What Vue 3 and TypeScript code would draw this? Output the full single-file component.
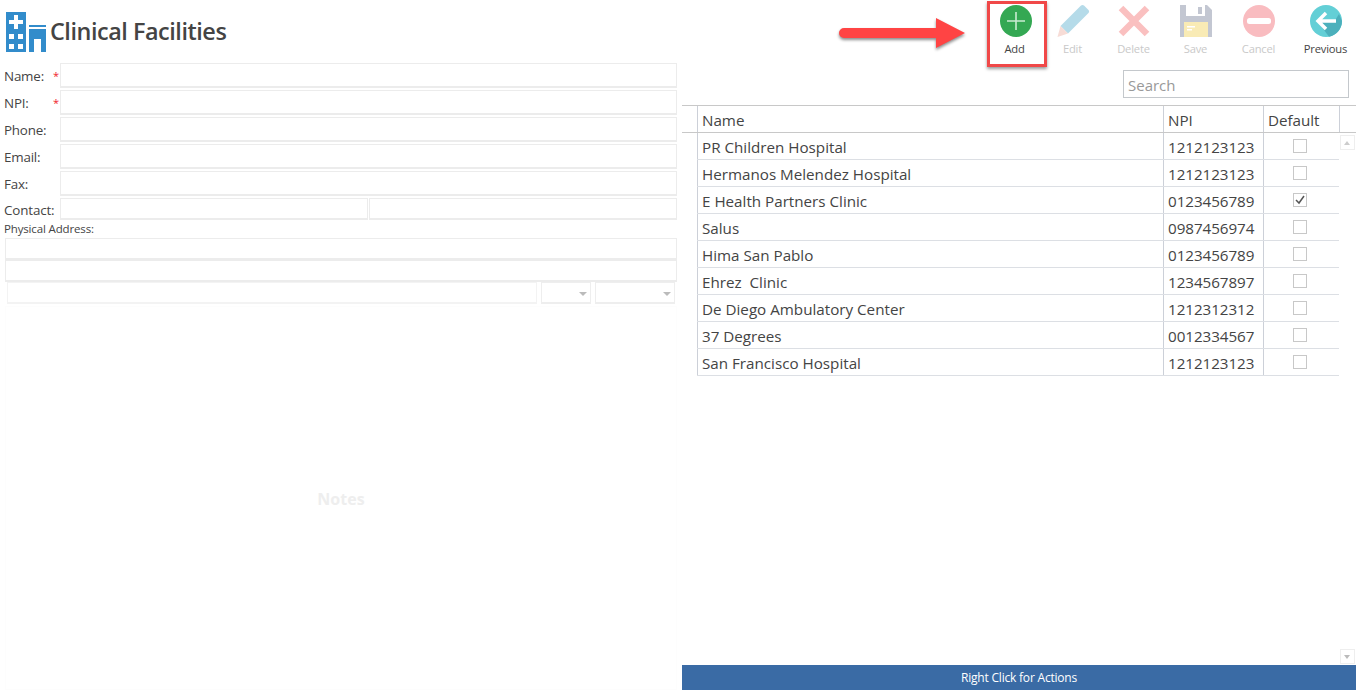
<script setup lang="ts">
interface Facility { name: string; npi: string; isDefault: boolean }
const facilities: Facility[] = [
  { name: 'PR Children Hospital', npi: '1212123123', isDefault: false },
  { name: 'Hermanos Melendez Hospital', npi: '1212123123', isDefault: false },
  { name: 'E Health Partners Clinic', npi: '0123456789', isDefault: true },
  { name: 'Salus', npi: '0987456974', isDefault: false },
  { name: 'Hima San Pablo', npi: '0123456789', isDefault: false },
  { name: 'Ehrez  Clinic', npi: '1234567897', isDefault: false },
  { name: 'De Diego Ambulatory Center', npi: '1212312312', isDefault: false },
  { name: '37 Degrees', npi: '0012334567', isDefault: false },
  { name: 'San Francisco Hospital', npi: '1212123123', isDefault: false },
]
const fields = [
  { label: 'Name:', req: true },
  { label: 'NPI:', req: true },
  { label: 'Phone:', req: false },
  { label: 'Email:', req: false },
  { label: 'Fax:', req: false },
]
</script>

<template>
  <div class="page">
    <section class="left">
      <header class="title">
        <svg class="logo" width="41" height="41" viewBox="0 0 41 41">
          <path fill="#328ccb" d="M0 0h20v40H0z" />
          <path fill="#fff" d="M8 3h4v5h5v4h-5v5H8v-5H3V8h5zM3 22h5v5H3zM12 22h5v5h-5zM3 32h5v5H3zM12 32h5v5h-5z" />
          <path fill="#328ccb" d="M23 13h17v2H23zM23 17h17v23h-5V27h-7v13h-5z" />
        </svg>
        <h1>Clinical Facilities</h1>
      </header>

      <div class="form">
        <div v-for="f in fields" :key="f.label" class="row">
          <label>{{ f.label }}<span v-if="f.req" class="req">*</span></label>
          <div class="box grow"></div>
        </div>
        <div class="row contact">
          <label>Contact:</label>
          <div class="box first"></div>
          <div class="box grow"></div>
        </div>
        <div class="addr-label">Physical Address:</div>
        <div class="box addr"></div>
        <div class="box addr"></div>
        <div class="city">
          <div class="box soft grow"></div>
          <div class="box soft sel state"><i></i></div>
          <div class="box soft sel zip"><i></i></div>
        </div>
        <div class="notes">Notes</div>
      </div>
    </section>

    <section class="right">
      <nav class="toolbar">
        <div class="tool add">
          <svg width="34" height="34" viewBox="0 0 34 34">
            <circle cx="17" cy="17" r="16" fill="#34a853" />
            <path d="M17 8v18M8 17h18" stroke="#c9ebd2" stroke-width="1.6" />
          </svg>
          <span>Add</span>
        </div>
        <div class="tool edit off">
          <svg width="34" height="34" viewBox="0 0 34 34">
            <path fill="#b5dbe9" d="M25 1.500c1-.8 2-.8 3 0l4.500 4.500c.8 1 .8 2 0 3L12 29.500 4.500 22z" />
            <path fill="#f7dcd6" d="M4.500 22l7.500 7.500L1.500 33z" />
          </svg>
          <span>Edit</span>
        </div>
        <div class="tool del off">
          <svg width="34" height="34" viewBox="0 0 34 34">
            <path d="M4 4l26 26M30 4L4 30" stroke="#fac0c0" stroke-width="6.5" />
          </svg>
          <span>Delete</span>
        </div>
        <div class="tool save off">
          <svg width="34" height="34" viewBox="0 0 34 34">
            <path fill="#c3c7d2" d="M1 1h27l5 5v27H1z" />
            <path fill="#fff" d="M7 1h19v11H7z" />
            <path fill="#c3c7d2" d="M19 3h4v7h-4z" />
            <path fill="#f9ebb5" d="M5 18h24v15H5z" />
            <path fill="#fff" d="M8 22h8v1.500H8zM8 25h5v1.500H8z" />
          </svg>
          <span>Save</span>
        </div>
        <div class="tool cancel off">
          <svg width="34" height="34" viewBox="0 0 34 34">
            <circle cx="17" cy="17" r="16" fill="#f9bcc0" />
            <rect x="5" y="14" width="24" height="6" rx="2.500" fill="#fff" />
          </svg>
          <span>Cancel</span>
        </div>
        <div class="tool prev">
          <svg width="34" height="34" viewBox="0 0 34 34">
            <circle cx="17" cy="17" r="16" fill="#63cfd6" />
            <path fill="#4cb0bc" d="M30 10l3 7A16 16 0 0 1 20 32.700L9 18h16z" />
            <path d="M17 9l-8 8 8 8M9 17h18" stroke="#fff" stroke-width="3.500" fill="none" />
          </svg>
          <span>Previous</span>
        </div>
      </nav>

      <div class="search-row"><div class="search">Search</div></div>

      <div class="grid-wrap">
        <div class="head">
          <div class="gutter"></div>
          <div class="c name">Name</div>
          <div class="c npi">NPI</div>
          <div class="c def">Default</div>
          <div class="c end"></div>
        </div>
        <div class="body">
          <div class="rows">
            <div v-for="f in facilities" :key="f.name" class="line">
              <div class="c name">{{ f.name }}</div>
              <div class="c npi">{{ f.npi }}</div>
              <div class="c def">
                <span class="check">
                  <svg v-if="f.isDefault" width="12" height="12" viewBox="0 0 12 12">
                    <path d="M2 6l3 3 5-7" stroke="#555" stroke-width="1.500" fill="none" />
                  </svg>
                </span>
              </div>
            </div>
          </div>
          <div class="scroll">
            <div class="sbtn"><i class="up"></i></div>
            <div class="sbtn"><i></i></div>
          </div>
        </div>
        <div class="foot">Right Click for Actions</div>
      </div>
    </section>

    <div class="callout"></div>
    <svg class="arrow" width="136" height="40" viewBox="0 0 136 40">
      <path fill="#ff4444" stroke="none" d="M6 11h92V1l29 15-29 15V21H6a5 5 0 0 1 0-10z" style="filter: drop-shadow(0 2px 1.500px rgba(0,0,0,.45))" />
    </svg>
  </div>
</template>

<style>
html, body { margin: 0; background: #fff; }
</style>

<style scoped>
.page {
  position: relative;
  width: 1361px;
  height: 693px;
  overflow: hidden;
  display: flex;
  font-family: "Open Sans", "Noto Sans", sans-serif;
  color: #444;
}
.left { width: 682px; flex: none; }
.title { display: flex; align-items: center; height: 63px; padding-left: 6px; box-sizing: border-box; padding-top: 1px; }
.logo { display: block; }
h1 { margin: -2px 0 0 3px; font-size: 23.4px; font-weight: 600; color: #444; letter-spacing: -0.45px; }
.form { display: flex; flex-direction: column; }
.row { display: flex; height: 25px; margin-bottom: 2px; padding-right: 5px; }
.row label { width: 60px; flex: none; box-sizing: border-box; padding-left: 4px; font-size: 13.4px; line-height: 26px; position: relative; letter-spacing: -0.2px; }
.req { position: absolute; left: 53px; top: 0; color: #f01c2c; font-size: 11px; }
.box { border: 1px solid #ececec; box-sizing: border-box; border-width: 1px 1px 2px 1px; background: #fff; }
.grow { flex: 1; }
.first { width: 308px; flex: none; margin-right: 1px; }
.contact { height: 22px; margin-bottom: 0; }
.contact label { line-height: 24px; letter-spacing: -0.15px; }
.addr-label { font-size: 11.5px; line-height: 18px; padding-left: 4px; letter-spacing: -0.15px; }
.addr { height: 22px; margin-left: 5px; margin-right: 5px; }
.city { display: flex; height: 22px; margin-left: 7px; margin-right: 7px; gap: 4px; }
.soft { border-color: #f3f3f3; }
.sel { position: relative; flex: none; border-color: #eee; }
.state { width: 50px; }
.zip { width: 80px; }
.sel i { position: absolute; right: 3px; top: 9px; width: 0; height: 0; border: 4px solid transparent; border-top: 4px solid #bbb; border-bottom: 0; }
.notes {
  margin: 2px 5px 0;
  height: 384px;
  border: 1px solid #fdfdfd;
  box-sizing: border-box;
  display: flex;
  align-items: center;
  justify-content: center;
  font-size: 16px;
  font-weight: 700;
  color: #eeeeee;
  padding-top: 2px;
}
.right { width: 679px; flex: none; display: flex; flex-direction: column; }
.toolbar { height: 70px; position: relative; display: flex; padding-left: 300px; }
.tool { display: flex; flex-direction: column; align-items: center; width: 62px; padding-top: 4px; font-size: 11.2px; letter-spacing: -0.2px; color: #444; box-sizing: border-box; flex: none; }
.tool svg { display: block; height: 34px; }
.tool span { margin-top: 3px; line-height: 15px; }
.off span { color: #c9c9c9; }
.add { width: 67px; }
.add span { margin-right: 2px; }
.edit { width: 47px; }
.del { width: 75px; }
.save { width: 49px; }
.cancel { width: 77px; }
.prev { width: 57px; }
.search-row { height: 35px; padding-left: 441px; }
.search { width: 226px; height: 28px; box-sizing: border-box; border: 1px solid #c4c8cc; padding-left: 4px; font-size: 15px; line-height: 29px; color: #999; }
.grid-wrap { width: 674px; display: flex; flex-direction: column; flex: 1; height: 588px; }
.head { display: flex; height: 28px; border-top: 1px solid #c8c8c8; border-bottom: 1px solid #c8c8c8; box-sizing: border-box; }
.gutter { width: 15px; flex: none; }
.c { box-sizing: border-box; border-left: 1px solid #ccd0d8; padding-left: 4px; font-size: 15.2px; line-height: 29px; white-space: pre; letter-spacing: -0.05px; color: #444; }
.name { width: 466px; flex: none; letter-spacing: 0; }
.npi { width: 100px; flex: none; }
.def { width: 76px; flex: none; }
.end { flex: 1; }
.body { display: flex; height: 532px; }
.rows { width: 657px; padding-left: 15px; box-sizing: border-box; flex: none; }
.line { display: flex; height: 27px; border-bottom: 1px solid #dcdfe4; box-sizing: border-box; }
.line .def { display: flex; justify-content: center; padding: 6px 4px 0 0; }
.check { width: 14px; height: 14px; border: 1px solid #c8c8c8; display: block; box-sizing: border-box; }
.check svg { display: block; }
.scroll { flex: 1; display: flex; flex-direction: column; justify-content: space-between; padding: 2px 1px 1px; box-sizing: border-box; }
.sbtn { width: 15px; height: 15px; box-sizing: border-box; border: 1px solid #eee; position: relative; }
.sbtn i { position: absolute; left: 3px; top: 5px; width: 0; height: 0; border: 3.500px solid transparent; border-top: 4px solid #bbb; border-bottom: 0; }
.sbtn i.up { border-top: 0; border-bottom: 4px solid #ccc; }
.foot { height: 25px; background: #3a6ba5; color: #fff; font-size: 12px; text-align: center; line-height: 25px; letter-spacing: -0.2px; }
.callout { position: absolute; left: 987px; top: 1px; width: 60px; height: 66px; box-sizing: border-box; border: 3px solid #f04848; box-shadow: 0 2px 3px rgba(0,0,0,.4); }
.arrow { position: absolute; left: 838px; top: 17px; overflow: visible; }
</style>
